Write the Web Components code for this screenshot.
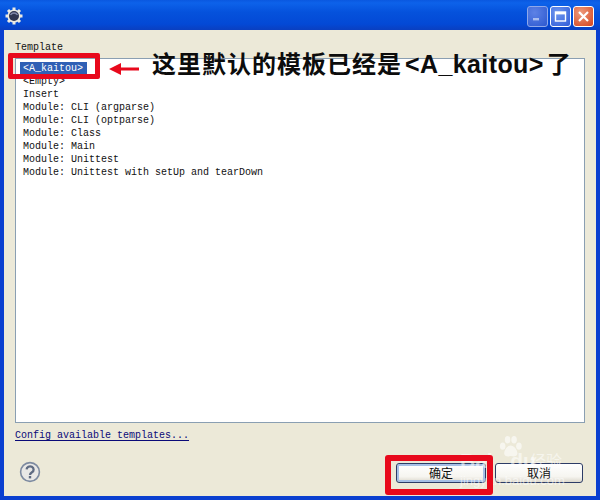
<!DOCTYPE html>
<html>
<head>
<meta charset="utf-8">
<style>
	html, body { margin: 0; padding: 0; width: 600px; height: 500px; overflow: hidden; }
</style>
</head>
<body>
<xp-window>
	<xp-titlebar slot="title"></xp-titlebar>
	<span class="label">Template</span>
	<template-list></template-list>
	<config-link>Config available templates...</config-link>
	<dialog-footer></dialog-footer>
	<shot-markup></shot-markup>
</xp-window>

<script>
const MONO = `"Liberation Mono", "Noto Sans CJK SC", monospace`;

class XpWindow extends HTMLElement {
	constructor() {
		super();
		this.attachShadow({ mode: "open" }).innerHTML = `
			<style>
				:host {
					display: flex;
					flex-direction: column;
					position: relative;
					width: 600px;
					height: 500px;
					box-sizing: border-box;
					background: #ece9d8;
					overflow: hidden;
				}
				.body {
					flex: 1;
					display: flex;
					flex-direction: column;
					border: solid #0a3fd0;
					border-width: 0 4px 4px 4px;
					padding: 12px 11px 0 11px;
					min-height: 0;
					font: 10px ${MONO};
					color: #111;
				}
			</style>
			<slot name="title"></slot>
			<div class="body"><slot></slot></div>
		`;
	}
}

class XpTitlebar extends HTMLElement {
	constructor() {
		super();
		this.attachShadow({ mode: "open" }).innerHTML = `
			<style>
				:host {
					display: flex;
					align-items: center;
					height: 30px;
					padding: 2px 6px 0 4px;
					box-sizing: border-box;
					background: linear-gradient(#0a58e0 0, #0d62ea 3px, #0552dc 12px, #0349d6 24px, #0a3fc0 30px);
				}
				.gear { flex: none; margin-right: auto; }
				.btns { display: flex; gap: 2px; }
				.btn {
					width: 21px; height: 21px;
					box-sizing: border-box;
					border: 1px solid #fff;
					border-radius: 3px;
					display: flex; align-items: center; justify-content: center;
					background: radial-gradient(circle at 35% 30%, #6f96ee, #2f5cd8);
				}
				.btn.min { background: radial-gradient(circle at 35% 30%, #5d82e6, #2c58cf); border-color: #8fa8ea; }
				.btn.close { background: radial-gradient(circle at 35% 30%, #ee9a7c, #d5431c); }
			</style>
			<svg class="gear" width="20" height="20" viewBox="0 0 20 20">
				<g stroke="#eceae2" stroke-width="3">
					<path d="M10 1.5v17M1.5 10h17M4 4l12 12M16 4L4 16"/>
				</g>
				<circle cx="10" cy="10" r="6.6" fill="#eceae2"/>
				<circle cx="10" cy="10" r="5" fill="#2f3550"/>
				<path d="M6.5 9a4 4 0 0 1 7 0" fill="none" stroke="#7f86a8" stroke-width="1.4"/>
			</svg>
			<div class="btns">
				<div class="btn min">
					<svg width="13" height="13" viewBox="0 0 13 13"><rect x="2" y="8" width="6" height="2.4" fill="#a9bdf0"/></svg>
				</div>
				<div class="btn">
					<svg width="13" height="13" viewBox="0 0 13 13"><rect x="1.5" y="2" width="10" height="9" fill="none" stroke="#fff" stroke-width="1.4"/><rect x="1.5" y="2" width="10" height="2.4" fill="#fff"/></svg>
				</div>
				<div class="btn close">
					<svg width="13" height="13" viewBox="0 0 13 13"><path d="M2 2l9 9M11 2l-9 9" stroke="#fff" stroke-width="2.2" fill="none"/></svg>
				</div>
			</div>
		`;
	}
}

class TemplateList extends HTMLElement {
	constructor() {
		super();
		const items = [
			"<A_kaitou>", "<Empty>", "Insert",
			"Module: CLI (argparse)", "Module: CLI (optparse)",
			"Module: Class", "Module: Main", "Module: Unittest",
			"Module: Unittest with setUp and tearDown"
		];
		const rows = items.map((t, i) => {
			const text = t.replace(/</g, "&lt;").replace(/>/g, "&gt;");
			return `<div class="row"><span class="${i === 0 ? "sel" : ""}">${text}</span></div>`;
		}).join("");
		this.attachShadow({ mode: "open" }).innerHTML = `
			<style>
				:host {
					display: block;
					height: 365px;
					margin-top: 5px;
					box-sizing: border-box;
					background: #fff;
					border: 1px solid #8a9fb2;
					padding: 3px 7px;
				}
				.row { height: 13px; line-height: 13px; white-space: pre; }
				.sel { display: inline-block; height: 14px; background: #2f60b5; color: #fff; padding: 0 4px 0 3px; margin-left: -3px; }
			</style>
			${rows}
		`;
	}
}

class ConfigLink extends HTMLElement {
	constructor() {
		super();
		this.attachShadow({ mode: "open" }).innerHTML = `
			<style>
				:host { display: block; margin-top: 6px; height: 13px; line-height: 13px; color: #0a0a78; }
				u { text-underline-offset: 2px; }
			</style>
			<u><slot></slot></u>
		`;
	}
}

class DialogButton extends HTMLElement {
	constructor() {
		super();
		this.attachShadow({ mode: "open" }).innerHTML = `
			<style>
				:host {
					display: flex;
					align-items: center;
					justify-content: center;
					height: 20px;
					box-sizing: border-box;
					border: 1px solid #2d3c66;
					border-radius: 3px;
					background: linear-gradient(#ffffff, #f6f5f0 70%, #dcd8cc);
					font: 12px/14px "Noto Sans CJK SC", sans-serif;
					color: #111;
				}
				:host([default]) { box-shadow: inset 0 0 0 2px #a6c0e6; }
			</style>
			<slot></slot>
		`;
	}
}

class DialogFooter extends HTMLElement {
	constructor() {
		super();
		this.attachShadow({ mode: "open" }).innerHTML = `
			<style>
				:host {
					display: flex;
					align-items: center;
					margin-top: 21px;
					padding-right: 2px;
				}
				svg { margin-left: 4px; margin-top: -2px; }
				.spacer { flex: 1; }
				dialog-button { width: 90px; }
				dialog-button + dialog-button { margin-left: 9px; width: 88px; }
			</style>
			<svg width="22" height="22" viewBox="0 0 22 22">
				<circle cx="11" cy="11" r="9.4" fill="#e9e8e6" stroke="#7d8aa0" stroke-width="1.6"/>
				<path d="M7.6 8.4a3.5 3.2 0 1 1 5.4 2.8c-1.2.8-2 1.3-2 2.8" fill="none" stroke="#5f6b82" stroke-width="2.3"/>
				<rect x="9.8" y="15" width="2.4" height="2.4" fill="#5f6b82"/>
			</svg>
			<div class="spacer"></div>
			<dialog-button default>确定</dialog-button>
			<dialog-button>取消</dialog-button>
		`;
	}
}

// red boxes, arrow, caption and watermark lie over the dialog
class ShotMarkup extends HTMLElement {
	constructor() {
		super();
		this.attachShadow({ mode: "open" }).innerHTML = `
			<style>
				:host { position: absolute; inset: 0; pointer-events: none; }
				.box { position: absolute; box-sizing: border-box; border: 5px solid #e8091c; border-radius: 2px; }
				.one { left: 8px; top: 53px; width: 92px; height: 26px; }
				.two { left: 385px; top: 455px; width: 108px; height: 40px; border-width: 6px; border-radius: 3px; }
				svg.arrow { position: absolute; left: 109px; top: 62px; }
				.cap {
					position: absolute; left: 152px; top: 48px;
					font: bold 24px/30px "Noto Sans CJK SC", sans-serif;
					letter-spacing: 1px;
					color: #0c0c0c;
					white-space: nowrap;
				}
				.cap b { font: bold 25px/30px "Liberation Sans", sans-serif; letter-spacing: .4px; margin: 0 3px; }
				.wm { position: absolute; color: #fff; opacity: .55; white-space: nowrap; }
				.bai { left: 460px; top: 452px; font: bold 21px/17px "Liberation Sans", sans-serif; }
				.jy { left: 530px; top: 452px; font: 16px/16px "Noto Sans CJK SC", sans-serif; }
				.url { left: 460px; top: 475px; font: 13px/12px "Liberation Sans", sans-serif; }
				svg.paw { position: absolute; left: 497px; top: 434px; opacity: .6; }
			</style>
			<svg class="paw" width="26" height="26" viewBox="0 0 32 32" fill="#fff">
				<ellipse cx="7" cy="15" rx="3.4" ry="4.4"/><ellipse cx="13" cy="7" rx="3.4" ry="4.6"/>
				<ellipse cx="21" cy="7" rx="3.4" ry="4.6"/><ellipse cx="27" cy="15" rx="3.4" ry="4.4"/>
				<path d="M17 14c-4 0-9 6-8 11 1 3 5 3 8 2 3 1 7 1 8-2 1-5-4-11-8-11z"/>
			</svg>
			<span class="wm bai">Bai&nbsp;&nbsp;&nbsp;du</span>
			<span class="wm jy">经验</span>
			<span class="wm url">jingyan.baidu.com</span>
			<div class="box one"></div>
			<div class="box two"></div>
			<svg class="arrow" width="32" height="14" viewBox="0 0 32 14">
				<path d="M0 7l12-6v4.6h18v2.8h-18v4.6z" fill="#e8091c"/>
			</svg>
			<span class="cap">这里默认的模板已经是<b>&lt;A_kaitou&gt;</b>了</span>
		`;
	}
}

customElements.define("xp-window", XpWindow);
customElements.define("xp-titlebar", XpTitlebar);
customElements.define("template-list", TemplateList);
customElements.define("config-link", ConfigLink);
customElements.define("dialog-button", DialogButton);
customElements.define("dialog-footer", DialogFooter);
customElements.define("shot-markup", ShotMarkup);
</script>
</body>
</html>
